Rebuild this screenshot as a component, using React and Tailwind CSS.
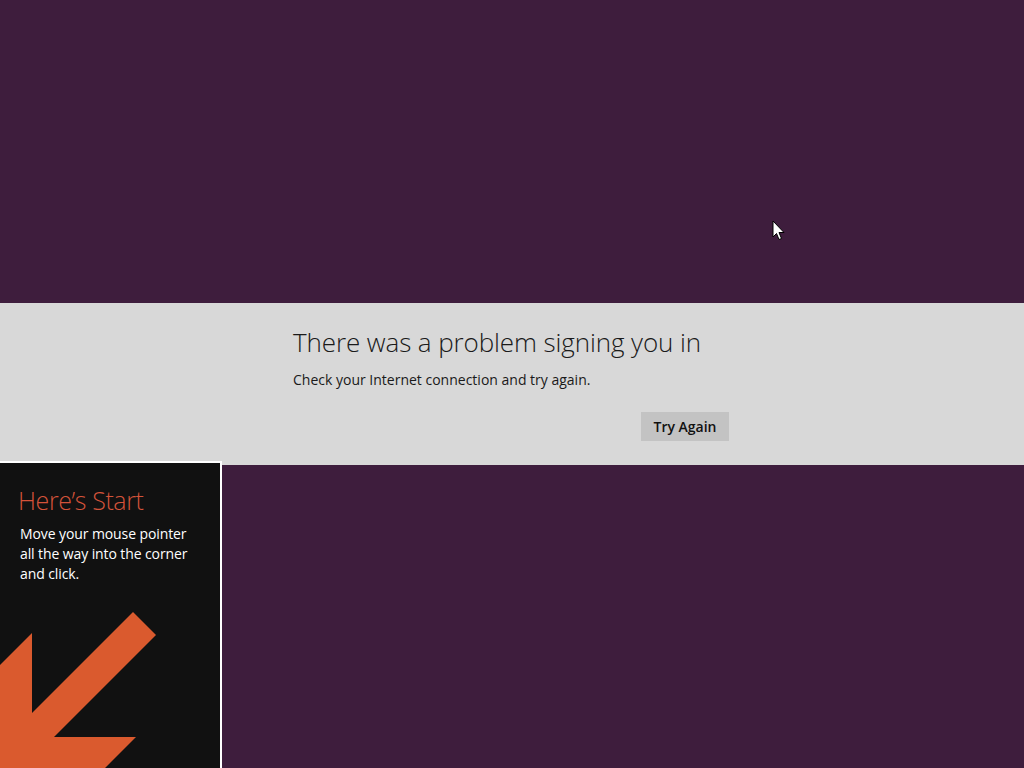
import React from "react";

const font = { fontFamily: '"Open Sans", "Noto Sans", sans-serif' };

const StartTip = () => {
  return (
    <div className="absolute left-0 bottom-0 w-[222px] h-[307px] bg-[#111111] border-t-2 border-r-2 border-white overflow-hidden">
      <div className="pt-[20px] pl-[18px]">
        <p className="text-[25px] leading-[34px] font-light text-[#d4533a] tracking-[-0.4px]">Here’s Start</p>
        <p className="mt-[7px] pl-[2px] text-[14px] leading-[20px] text-white tracking-[-0.1px]">
          Move your mouse pointer
          <br />
          all the way into the corner
          <br />
          and click.
        </p>
      </div>
      <svg className="absolute left-0 top-0" width="222" height="307" viewBox="0 463 222 307">
        <polygon
          fill="#da5a2e"
          points="133,612 156,635 54,737 136,737 73,800 -40,800 -40,705 32,633 32,713"
        />
      </svg>
    </div>
  );
};

const Cursor = () => (
  <svg className="absolute left-[772px] top-[220px]" width="14" height="22" viewBox="0 0 14 22">
    <path d="M1 1 L1 17 L4.5 13.5 L7 19.5 L9.5 18.5 L7 12.5 L12 12.5 Z" fill="white" stroke="black" strokeWidth="1" />
  </svg>
);

export default function App() {
  return (
    <div className="relative w-full h-screen bg-[#3e1d3d] flex flex-col overflow-hidden" style={font}>
      <div className="h-[303px] shrink-0" />
      <div className="h-[162px] shrink-0 bg-[#d8d8d8]">
        <div className="ml-[293px] w-[436px] pt-[22px] flex flex-col">
          <h1 className="text-[26px] leading-[34px] font-light text-[#1a1a1a] tracking-[-0.1px]">
            There was a problem signing you in
          </h1>
          <p className="mt-[11px] text-[14px] leading-[20px] text-[#1a1a1a]">
            Check your Internet connection and try again.
          </p>
          <div className="mt-[22px] flex justify-end">
            <button className="w-[88px] h-[29px] bg-[#c3c3c3] text-[14px] font-semibold text-[#111]">
              Try Again
            </button>
          </div>
        </div>
      </div>
      <StartTip />
      <Cursor />
    </div>
  );
}
